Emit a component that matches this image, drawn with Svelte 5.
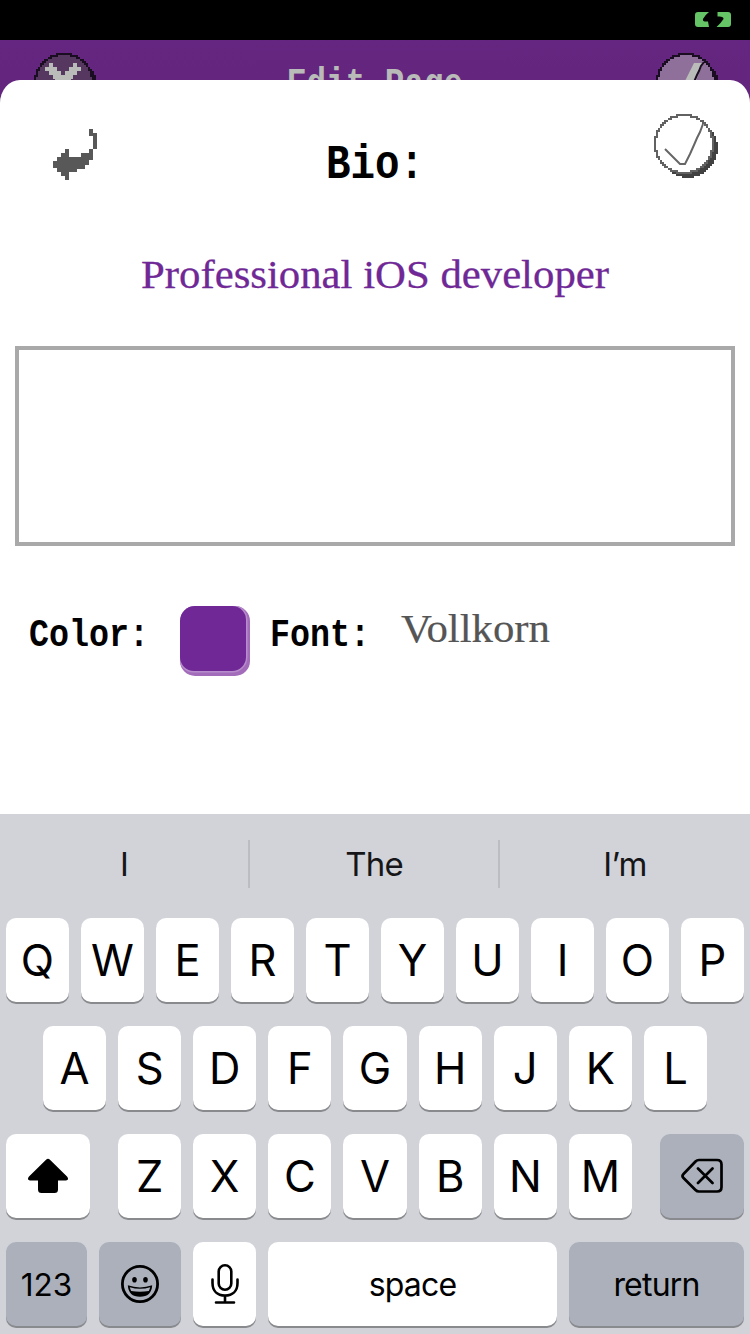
<script>
  const top = [...'QWERTYUIOP'];
  const home = [...'ASDFGHJKL'];
  const bottom = [...'ZXCVBNM'];
  const suggestions = ['I', 'The', 'I’m'];

  // Row-by-row disc on a 2px grid, for the pixel-art buttons
  function disc(cx, cy, r) {
    let d = '';
    for (let y = 0; y < 66; y += 2) {
      const dy = y + 1 - cy;
      if (Math.abs(dy) >= r) continue;
      const half = Math.sqrt(r * r - dy * dy);
      const x1 = Math.round((cx - half) / 2) * 2;
      const x2 = Math.round((cx + half) / 2) * 2;
      d += `M${x1} ${y}H${x2}V${y + 2}H${x1}Z`;
    }
    return d;
  }
  const shadow = disc(34, 34, 29.6);
  const outer = disc(30, 30, 30);
  const inner = disc(30, 30, 27.8);
</script>

{#snippet ring(fill, stroke, shade)}
  <path d={shadow} fill={shade} />
  <path d={outer} fill={stroke} />
  <path d={inner} {fill} />
{/snippet}

<div class="screen">
  <div class="status">
    <svg width="36" height="16" viewBox="0 0 36 16">
      <path d="M3 0H14Q10 3 8 7Q7 10 13 9.500L14 15H3Q0 15 0 12V3Q0 0 3 0ZM22.500 0H33Q36 0 36 3V12Q36 15 33 15H21.500Q26 11 28.500 7Q29 4 22.500 4.500Z" fill="#65c466" />
    </svg>
  </div>

  <div class="page-bar">
    <svg class="cancel" width="64" height="27" viewBox="0 0 64 27">
      <g transform="translate(0 0)">{@render ring('#553760', '#1a0d22', '#1a0d22')}</g>
      <path d="M15 10H19V14H23V18H27V22H31V18H35V14H39V10H43V14H47V18H43V22H39V26H37V30H21V26H19V22H15V18H11V14H15Z" fill="#babcb9" />
    </svg>
    <svg class="page-title" width="176" height="27">
      <text x="0" y="43" textLength="176" lengthAdjust="spacingAndGlyphs">Edit Page</text>
    </svg>
    <svg class="save" width="64" height="27" viewBox="0 0 64 27">
      {@render ring('#8f709b', '#1a0d22', '#1a0d22')}
      <path d="M38 10H47L40 28H29Z" fill="#babcb9" />
      <path d="M48 9L45 13L43 18L41 22L38 29" fill="none" stroke="#1a0d22" stroke-width="2" />
    </svg>
  </div>

  <div class="sheet-wrap">
    <main class="sheet">
      <header>
        <svg class="back" width="44" height="52" viewBox="0 0 44 52" fill="#585858">
          <path d="M12 20H16V28H28V24H36V20H40V7H36V0H40V4H44V20H40V31H36V36H32V40H24V43H16V51H12V47H8V43H4V39H0V32H4V28H8V24H12Z" />
        </svg>
        <svg class="title" width="98" height="60">
          <text x="0" y="50" textLength="98" lengthAdjust="spacingAndGlyphs">Bio:</text>
        </svg>
        <svg class="done" width="64" height="64" viewBox="0 0 64 64">
          {@render ring('#fff', '#626262', '#414141')}
          <path d="M11 35L26 50H31L36 40L40 31L43 24L46 18L49 10" fill="none" stroke="#666" stroke-width="2" />
        </svg>
      </header>

      <svg class="preview" width="468" height="64">
        <text x="0" y="48" textLength="468" lengthAdjust="spacingAndGlyphs">Professional iOS developer</text>
      </svg>

      <div class="field"></div>

      <div class="options">
        <svg class="label" width="120" height="60">
          <text x="0" y="40" textLength="120" lengthAdjust="spacingAndGlyphs">Color:</text>
        </svg>
        <div class="swatch"><div></div></div>
        <svg class="label font" width="100" height="60">
          <text x="0" y="40" textLength="100" lengthAdjust="spacingAndGlyphs">Font:</text>
        </svg>
        <svg class="font-name" width="152" height="60">
          <text x="0" y="36" textLength="149" lengthAdjust="spacingAndGlyphs">Vollkorn</text>
        </svg>
      </div>
    </main>
  </div>

  <div class="keyboard">
    <div class="suggestions">
      {#each suggestions as s}<span>{s}</span>{/each}
    </div>
    <div class="row r1">
      {#each top as k}<div class="key">{k}</div>{/each}
    </div>
    <div class="row r2">
      {#each home as k}<div class="key">{k}</div>{/each}
    </div>
    <div class="row r3">
      <div class="key">
        <svg width="40" height="36" viewBox="0 0 40 36">
          <path d="M18.300 1.500Q20 0 21.700 1.500L39 18.500Q41.500 22 38 22.500H30V31.500Q30 35 26.500 35H13.500Q10 35 10 31.500V22.500H2Q-1.500 22 1 18.500Z" />
        </svg>
      </div>
      <div class="letters">
        {#each bottom as k}<div class="key">{k}</div>{/each}
      </div>
      <div class="key gray">
        <svg width="42" height="36" viewBox="0 0 42 36" fill="none" stroke="#000" stroke-width="2.700" stroke-linecap="round" stroke-linejoin="round">
          <path d="M18 2H36Q40.500 2 40.500 6.500V29Q40.500 33.500 36 33.500H18Q16 33.500 14.500 32L2.500 20Q.5 18 2.500 16L14.500 3.500Q16 2 18 2ZM17 10.500L31.500 25M31.500 10.500L17 25" />
        </svg>
      </div>
    </div>
    <div class="row r4">
      <div class="key gray word num">123</div>
      <div class="key gray">
        <svg width="38" height="38" viewBox="0 0 38 38">
          <circle cx="19" cy="19" r="17.600" fill="none" stroke="#000" stroke-width="2.800" />
          <ellipse cx="13.500" cy="14.800" rx="2.300" ry="2.800" />
          <ellipse cx="24.500" cy="14.800" rx="2.300" ry="2.800" />
          <path d="M6.800 20.300Q19 24.500 31.200 20.300Q30.500 31.800 19 31.800Q7.500 31.800 6.800 20.300Z" />
          <path d="M8.800 22.200Q19 25.300 29.200 22.200Q28.900 24 27.800 26Q19 27.500 10.200 26Q9.100 24 8.800 22.200Z" fill="#abb0bb" />
        </svg>
      </div>
      <div class="key">
        <svg width="28" height="40" viewBox="0 0 28 40" fill="none" stroke="#000" stroke-width="2.600" stroke-linecap="round">
          <rect x="7.700" y="1.300" width="12.600" height="24.500" rx="6.300" />
          <path d="M1.500 15.500V19C1.500 27 6.500 31.500 14 31.500S26.500 27 26.500 19V15.500M14 31.500V38.500M5 38.500H23" />
        </svg>
      </div>
      <div class="key word">space</div>
      <div class="key gray word">return</div>
    </div>
  </div>
</div>

<style>
  :global(body) { margin: 0; }
  svg { display: block; flex: none; }
  .screen { width: 750px; height: 1334px; overflow: hidden; display: flex; flex-direction: column; background: #fff; }
  .status { height: 40px; background: #000; display: flex; justify-content: flex-end; padding: 12px 19px 0 0; box-sizing: border-box; }
  .page-bar { height: 40px; background: linear-gradient(#652681, #63257d); display: grid; grid-template-columns: 1fr auto 1fr; align-items: end; overflow: hidden; }
  .cancel { margin-left: 34px; }
  .page-title { margin-left: -1px; }
  .save { justify-self: end; margin-right: 30px; }
  .page-title text, .title text, .label text { font-family: "Liberation Mono", monospace; font-weight: 700; }
  .page-title text { font-size: 40px; fill: #b9bbb8; }
  .title, .label, .preview, .font-name { overflow: visible; }
  .title text { font-size: 48px; }
  .label text { font-size: 39.500px; }
  .sheet-wrap { height: 734px; background: linear-gradient(#63257d 0 40px, #fff 40px); }
  .sheet { height: 734px; background: #fff; border-radius: 20px 20px 0 0 / 23px 23px 0 0; overflow: hidden; }
  header { height: 160px; display: grid; grid-template-columns: 1fr auto 1fr; align-items: start; }
  .back { margin: 49px 0 0 53px; }
  .title { margin-top: 48px; }
  .done { justify-self: end; margin: 34px 32px 0 0; }
  .preview { margin: 0 auto; }
  .preview text { font-family: "Liberation Serif", serif; font-size: 41px; fill: #6f2896; stroke: #6f2896; stroke-width: .3px; }
  .field { height: 200px; box-sizing: border-box; margin: 42px 15px 0; border: 4px solid #a9a9a9; }
  .options { display: flex; align-items: flex-start; height: 70px; margin-top: 60px; padding-left: 29px; }
  .swatch { width: 70px; height: 70px; margin-left: 31px; background: #a36cbb; border-radius: 15px; overflow: hidden; }
  .swatch div { width: 66px; height: 65px; background: #6f2896; border-radius: 14px; box-shadow: 0 0 0 1.500px #b88dcb; }
  .font { margin-left: 20px; }
  .font-name { margin-left: 31px; }
  .font-name text { font-family: "Liberation Serif", serif; font-size: 41px; fill: #555; stroke: #555; stroke-width: .2px; }
  .keyboard { height: 520px; background: #d1d3d9; font-family: Inter, sans-serif; color: #000; }
  .suggestions { height: 104px; display: grid; grid-template-columns: repeat(3, 1fr); align-items: center; box-sizing: border-box; padding-bottom: 4px; }
  .suggestions span { height: 48px; line-height: 49px; text-align: center; font-size: 33px; letter-spacing: -.8px; color: #161618; }
  .suggestions span:not(:last-child) { border-right: 2px solid #bbbdc3; }
  .row { display: grid; column-gap: 12px; height: 84px; margin-bottom: 24px; padding: 0 6px; }
  .r1 { grid-template-columns: repeat(10, 1fr); }
  .r2 { grid-template-columns: repeat(9, 1fr); padding: 0 43px; }
  .r3 { grid-template-columns: 84px 514px 84px; column-gap: 28px; }
  .r4 { grid-template-columns: 81px 82px 63px 289px 175px; }
  .letters { display: grid; grid-template-columns: repeat(7, 1fr); column-gap: 12px; }
  .key { display: flex; align-items: center; justify-content: center; min-width: 0; height: 84px; background: #fff; border-radius: 10px; box-shadow: 0 2px 0 #898a8d; font-size: 43.500px; }
  .gray { background: #abb0bb; }
  .word { font-size: 32px; letter-spacing: -.8px; }
  .num { font-size: 31.500px; letter-spacing: 0; }
</style>
